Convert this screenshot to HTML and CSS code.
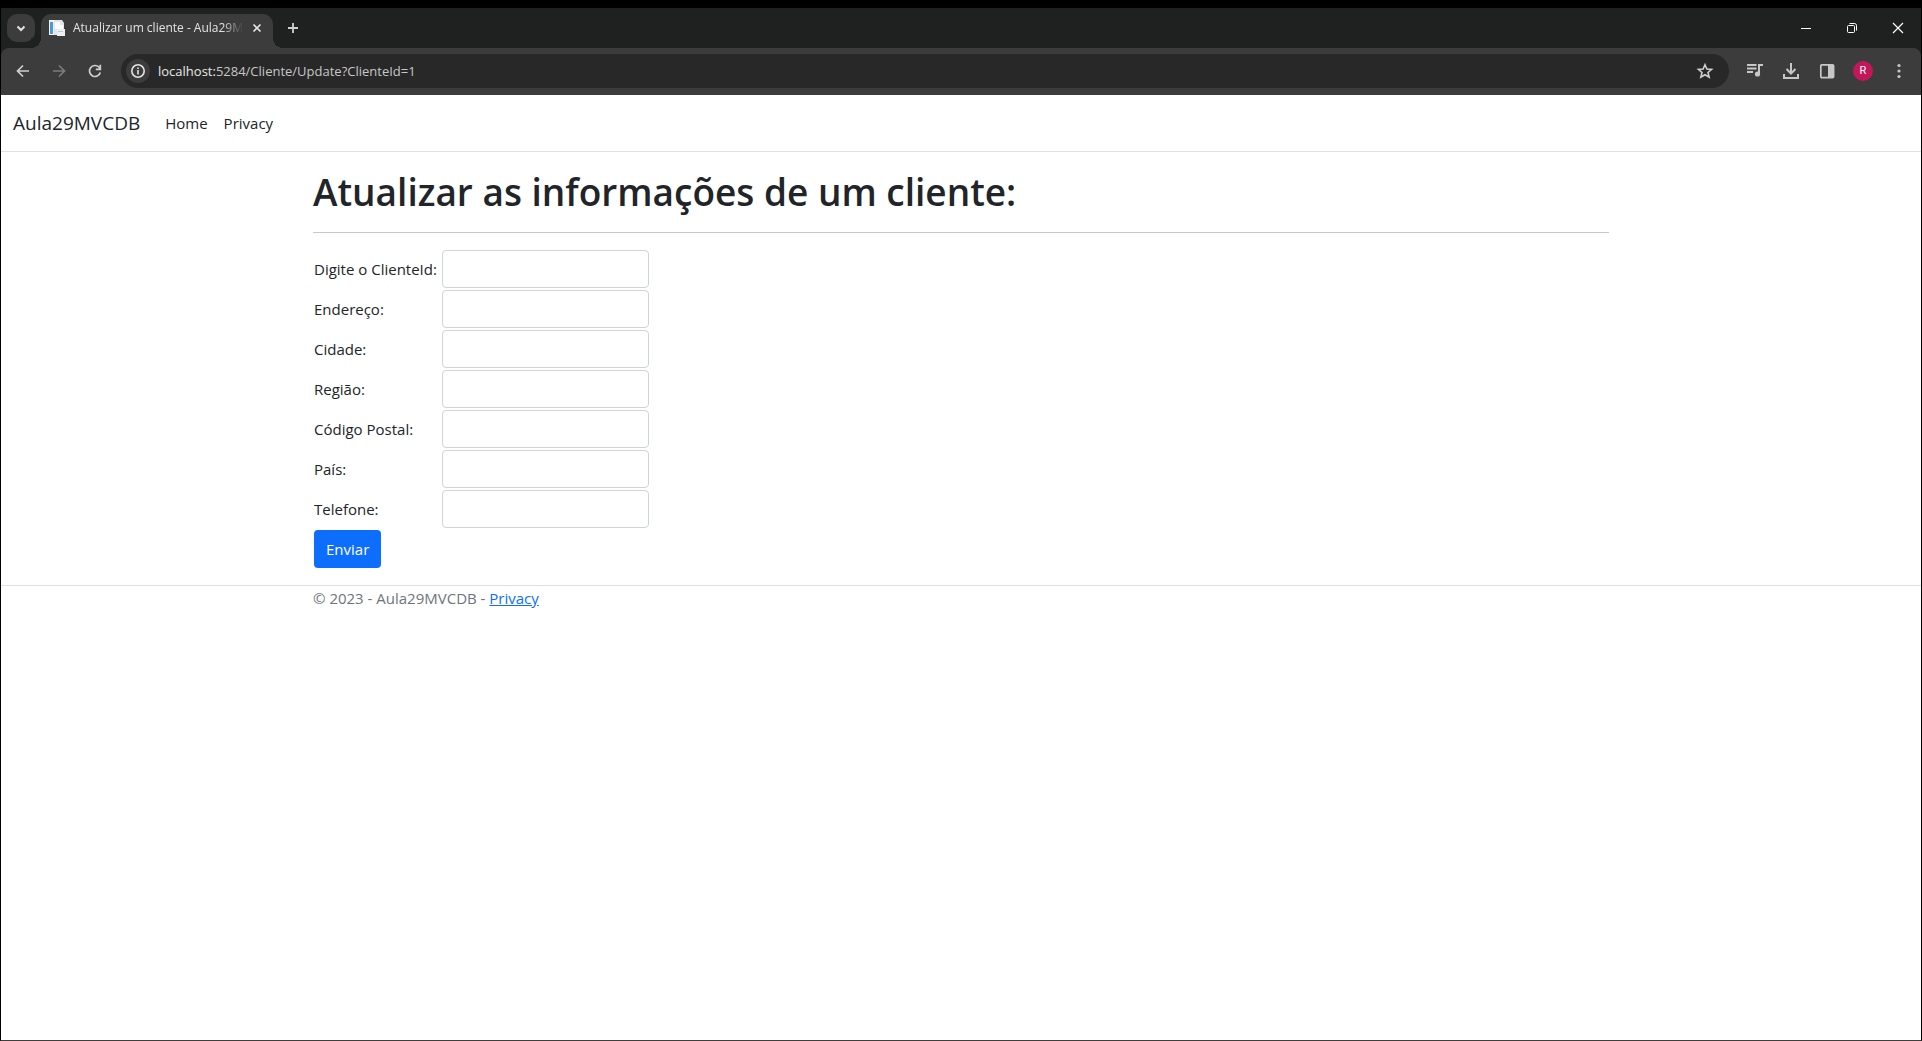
FILE: index.html
```html
<!DOCTYPE html>
<html lang="pt-BR">
<head>
<meta charset="utf-8">
<meta name="viewport" content="width=device-width, initial-scale=1">
<title>Atualizar um cliente - Aula29MVCDB</title>
<link rel="stylesheet" href="styles.css">
</head>
<body>
<div class="window">
  <div class="tabstrip">
    <button class="tab-search" type="button" aria-label="Pesquisar guias">
      <svg width="28" height="28" viewBox="0 0 28 28"><path d="M10.500 12.500 14 16l3.500-3.500" fill="none" stroke="#e3e3e3" stroke-width="2"/></svg>
    </button>
    <div class="tab">
      <svg class="favicon" width="16" height="16" viewBox="0 0 16 16">
        <path d="M0 0h6v15H0z" fill="#f1f3f4"/><path d="M1 2h3v12H1z" fill="#4a9bd4"/><path d="M5 0h8l2 3v12H5z" fill="#dfe6ea"/><path d="M6 2h5v3h3v4H6z" fill="#fff"/><path d="M8 9h8v7H8z" fill="#eceff3"/><path d="M9 11.500h5" stroke="#b9c7d6"/>
      </svg>
      <span class="tab-title">Atualizar um cliente - Aula29MVCDB</span>
      <button class="icon-btn tab-close" type="button" aria-label="Fechar guia">
        <svg width="16" height="16" viewBox="0 0 16 16"><path d="m4.500 4.500 7 7m0-7-7 7" stroke="#e3e3e3" stroke-width="1.700"/></svg>
      </button>
    </div>
    <button class="icon-btn new-tab" type="button" aria-label="Nova guia">
      <svg width="20" height="20" viewBox="0 0 20 20"><path d="M10 5v10M5 10h10" stroke="#d0d0d0" stroke-width="1.800"/></svg>
    </button>
    <div class="window-controls">
      <button class="icon-btn" type="button" aria-label="Minimizar"><svg width="12" height="12" viewBox="0 0 12 12"><path d="M1 6.500h10" stroke="#fff"/></svg></button>
      <button class="icon-btn" type="button" aria-label="Restaurar"><svg width="12" height="12" viewBox="0 0 12 12"><rect x="1.500" y="3.500" width="7" height="7" rx="1" fill="none" stroke="#fff"/><path d="M3.500 1.500h5a2 2 0 0 1 2 2v5" fill="none" stroke="#fff"/></svg></button>
      <button class="icon-btn" type="button" aria-label="Fechar"><svg width="12" height="12" viewBox="0 0 12 12"><path d="m1 1 10 10m0-10L1 11" stroke="#fff" stroke-width="1.200"/></svg></button>
    </div>
  </div>

  <div class="toolbar">
    <div class="nav-buttons">
      <button class="icon-btn" type="button" aria-label="Voltar"><svg width="16" height="16" viewBox="0 0 16 16"><path d="M14 8H3M8 2.500 2.500 8 8 13.500" fill="none" stroke="#d0d0d0" stroke-width="1.700"/></svg></button>
      <button class="icon-btn" type="button" aria-label="Avançar"><svg width="16" height="16" viewBox="0 0 16 16"><path d="M2 8h11M8 2.500 13.500 8 8 13.500" fill="none" stroke="#7b7b7b" stroke-width="1.700"/></svg></button>
      <button class="icon-btn" type="button" aria-label="Recarregar"><svg width="16" height="16" viewBox="0 0 16 16"><path d="M13.300 9.500A5.500 5.500 0 1 1 12 4.200L13.500 6" fill="none" stroke="#d0d0d0" stroke-width="1.700"/><path d="M13.300 1.800V6.300H8.800" fill="none" stroke="#d0d0d0" stroke-width="1.700"/></svg></button>
    </div>
    <div class="omnibox">
      <button class="site-info" type="button" aria-label="Informações do site">
        <svg width="16" height="16" viewBox="0 0 16 16"><circle cx="8" cy="8" r="6.200" fill="none" stroke="#e3e3e3" stroke-width="1.600"/><path d="M8 7v4.500M8 4.400v1.600" stroke="#e3e3e3" stroke-width="1.600"/></svg>
      </button>
      <span class="url"><span class="host">localhost:</span>5284/Cliente/Update?ClienteId=1</span>
      <button class="icon-btn" type="button" aria-label="Favoritar">
        <svg width="18" height="18" viewBox="0 0 18 18"><path d="m9 2.700 1.900 4.300 4.700.400-3.600 3.100 1.100 4.600L9 12.700l-4.100 2.400L6 10.500 2.400 7.400l4.700-.400z" fill="none" stroke="#d0d0d0" stroke-width="1.600"/></svg>
      </button>
    </div>
    <div class="actions">
      <button class="icon-btn" type="button" aria-label="Controle de mídia"><svg width="18" height="18" viewBox="0 0 18 18"><path d="M1 3h9.500M1 6.500h9.500M1 10h6" stroke="#c7c7c7" stroke-width="1.800"/><path d="M13 12V3h4" fill="none" stroke="#c7c7c7" stroke-width="2"/><circle cx="11.500" cy="12" r="2.600" fill="#c7c7c7"/></svg></button>
      <button class="icon-btn" type="button" aria-label="Downloads"><svg width="18" height="18" viewBox="0 0 18 18"><path d="M9 1v10M4.500 7 9 11.500 13.500 7M2 12v4h14v-4" fill="none" stroke="#c7c7c7" stroke-width="2"/></svg></button>
      <button class="icon-btn" type="button" aria-label="Painel lateral"><svg width="18" height="18" viewBox="0 0 18 18"><rect x="2.800" y="2.800" width="12.800" height="12.800" rx="1" fill="none" stroke="#c7c7c7" stroke-width="1.700"/><path d="M10 3h6v12h-6z" fill="#c7c7c7"/></svg></button>
      <button class="avatar" type="button" aria-label="Perfil">R</button>
      <button class="icon-btn" type="button" aria-label="Menu"><svg width="18" height="18" viewBox="0 0 18 18" fill="#c7c7c7"><circle cx="9" cy="3.500" r="1.600"/><circle cx="9" cy="9" r="1.600"/><circle cx="9" cy="14.500" r="1.600"/></svg></button>
    </div>
  </div>

  <div class="page">
    <header class="header">
      <nav class="navbar">
        <a class="brand" href="#">Aula29MVCDB</a>
        <a class="nav-link nav-home" href="#">Home</a>
        <a class="nav-link" href="#">Privacy</a>
      </nav>
    </header>
    <main class="container main">
      <h1>Atualizar as informações de um cliente:</h1>
      <hr>
      <form>
        <table class="form-table">
          <tr><td class="label-cell"><label for="clienteId">Digite o ClienteId:</label></td><td><input class="field" id="clienteId" type="text"></td></tr>
          <tr><td><label for="endereco">Endereço:</label></td><td><input class="field" id="endereco" type="text"></td></tr>
          <tr><td><label for="cidade">Cidade:</label></td><td><input class="field" id="cidade" type="text"></td></tr>
          <tr><td><label for="regiao">Região:</label></td><td><input class="field" id="regiao" type="text"></td></tr>
          <tr><td><label for="codigoPostal">Código Postal:</label></td><td><input class="field" id="codigoPostal" type="text"></td></tr>
          <tr><td><label for="pais">País:</label></td><td><input class="field" id="pais" type="text"></td></tr>
          <tr><td><label for="telefone">Telefone:</label></td><td><input class="field" id="telefone" type="text"></td></tr>
          <tr><td colspan="2"><button class="submit" type="submit">Enviar</button></td></tr>
        </table>
      </form>
    </main>
    <footer class="footer">
      <div class="container">© 2023 - Aula29MVCDB - <a href="#">Privacy</a></div>
    </footer>
  </div>
</div>
</body>
</html>
```
FILE: styles.css
```css
*, *::before, *::after { box-sizing: border-box; }

body {
  margin: 0;
  background: #000;
  color: #212529;
  font: 15px/24px "Segoe UI", "Open Sans", "Noto Sans", sans-serif;
}

button, input { margin: 0; font: inherit; }
button { display: flex; align-items: center; justify-content: center; padding: 0; border: 0; }
svg { display: block; flex: none; }

.window {
  display: flex;
  flex-direction: column;
  min-height: 100vh;
  padding-top: 8px;
  border: solid #000;
  border-width: 0 1px;
  border-bottom: 1px solid #443c3a;
}

.icon-btn { background: none; }

/* Tab strip */
.tabstrip {
  display: flex;
  align-items: flex-end;
  height: 40px;
  padding-left: 6px;
  background: #1f2120;
}

.tab-search {
  width: 28px;
  height: 28px;
  margin: 0 6px 6px 0;
  border-radius: 10px;
  background: #3c3c3c;
}

.tab {
  position: relative;
  display: flex;
  align-items: center;
  width: 232px;
  height: 34px;
  padding: 0 8px 6px;
  border-radius: 10px 10px 0 0;
  background: #3c3c3c;
}

.tab::before, .tab::after {
  content: "";
  position: absolute;
  bottom: 0;
  width: 10px;
  height: 10px;
}
.tab::before { right: 100%; background: radial-gradient(circle at 0 0, #1f2120 10px, #3c3c3c 10px); }
.tab::after { left: 100%; background: radial-gradient(circle at 100% 0, #1f2120 10px, #3c3c3c 10px); }

.tab-title {
  flex: 1;
  margin: 0 6px 0 8px;
  overflow: hidden;
  color: #e3e3e3;
  font-size: 12px;
  line-height: 20px;
  white-space: nowrap;
  -webkit-mask-image: linear-gradient(90deg, #000 88%, transparent);
  mask-image: linear-gradient(90deg, #000 88%, transparent);
}

.new-tab { margin: 0 0 10px 10px; }

.window-controls { display: flex; height: 40px; margin-left: auto; }
.window-controls .icon-btn { width: 46px; }

/* Toolbar */
.toolbar {
  display: flex;
  align-items: center;
  height: 47px;
  padding: 0 4px 1px;
  border-radius: 8px 8px 0 0;
  background: #3c3c3c;
  box-shadow: 0 -8px #1f2120;
  clip-path: inset(0);
}

.nav-buttons, .actions { display: flex; align-items: center; }
.nav-buttons .icon-btn, .actions .icon-btn { width: 36px; height: 36px; }

.omnibox {
  display: flex;
  flex: 1;
  align-items: center;
  height: 34px;
  margin: 0 8px;
  padding: 0 15px 0 5px;
  border-radius: 17px;
  background: #282828;
}

.site-info { width: 24px; height: 24px; border-radius: 50%; background: #3c3c3c; }
.url { flex: 1; margin-left: 8px; color: #c7c7c7; font-size: 13px; }
.host { color: #e8e8e8; }

.avatar {
  width: 20px;
  height: 20px;
  margin: 0 8px;
  border-radius: 50%;
  background: #c2185b;
  color: #fff;
  font-family: Roboto, sans-serif;
  font-size: 11px;
  line-height: 20px;
}

/* Page */
.page { flex: 1; background: #fff; }

.header { margin-bottom: 16px; border-bottom: 1px solid #dee2e6; }
.navbar { display: flex; align-items: center; height: 56px; padding: 0 12px; }
.brand, .nav-link { color: #212529; text-decoration: none; }
.brand { font-size: 19px; }
.nav-home { margin: 0 16px 0 25px; }

.container { max-width: 1320px; margin: 0 auto; padding: 0 12px; }
.main { padding-bottom: 16px; }

h1 { margin: 0; font-size: 37px; font-weight: 600; line-height: 48px; }
hr { margin: 16px 0; border: 0; border-top: 1px solid #c8c8ca; }

.form-table { border-collapse: collapse; }
.form-table td { padding: 1px; }
.label-cell { min-width: 128px; white-space: nowrap; }

.field {
  display: block;
  width: 207px;
  height: 38px;
  padding: 6px 12px;
  border: 1px solid #ced4da;
  border-radius: 4px;
  background: #fff;
  color: #212529;
}

.submit {
  height: 38px;
  padding: 0 12px;
  border-radius: 4px;
  background: #0d6efd;
  color: #fff;
}

.footer { border-top: 1px solid #dee2e6; color: #6c757d; }
.footer a { color: #0d6efd; }
```
